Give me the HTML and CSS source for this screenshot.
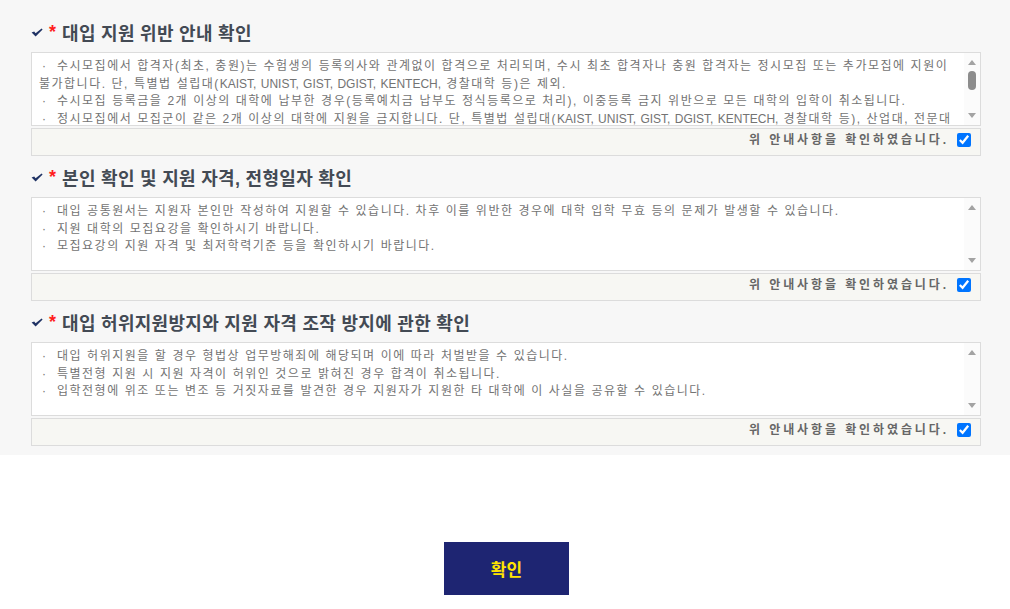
FILE: index.html
```html
<!DOCTYPE html>
<html lang="ko">
<head>
    <meta charset="UTF-8">
    <meta name="viewport" content="width=device-width, initial-scale=1.0">
    <title>지원 전 확인사항</title>
    <link rel="stylesheet" href="styles.css">
</head>
<body>
    <div class="agree-area">
        <!-- 대입 지원 위반 안내 -->
        <div class="agree-section">
            <h3 class="agree-title">
                <svg class="check-icon" width="12" height="9" viewBox="0 0 12 9"><path d="M0.6 4.6 L3.2 3.4 L4.6 5.2 L10.6 0.4 L11.6 1.6 L4.6 8.4 Z" fill="#1f3264"/></svg>
                <span class="required">*</span>대입 지원 위반 안내 확인
            </h3>
            <div class="notice-box">
                <div class="notice-text">
                    <p><span class="bullet">·</span>수시모집에서 합격자(최초, 충원)는 수험생의 등록의사와 관계없이 합격으로 처리되며, 수시 최초 합격자나 충원 합격자는 정시모집 또는 추가모집에 지원이 불가합니다. 단, 특별법 설립대(<span class="en">KAIST, UNIST, GIST, DGIST, KENTECH,</span> 경찰대학 등)은 제외.</p>
                    <p><span class="bullet">·</span>수시모집 등록금을 2개 이상의 대학에 납부한 경우(등록예치금 납부도 정식등록으로 처리), 이중등록 금지 위반으로 모든 대학의 입학이 취소됩니다.</p>
                    <p><span class="bullet">·</span>정시모집에서 모집군이 같은 2개 이상의 대학에 지원을 금지합니다. 단, 특별법 설립대(<span class="en">KAIST, UNIST, GIST, DGIST, KENTECH,</span> 경찰대학 등), 산업대, 전문대학은 제외.</p>
                    <p><span class="bullet">·</span>정시모집 등록금을 2개 이상의 대학에 납부한 경우 이중등록 금지 위반으로 모든 대학의 입학이 취소됩니다.</p>
                    <p><span class="bullet">·</span>추가모집에서 합격한 후 등록한 경우 다른 대학의 추가모집에 지원할 수 없습니다.</p>
                    <p><span class="bullet">·</span>위 사항을 위반한 경우 모든 대학의 입학이 취소될 수 있습니다.</p>
                </div>
                <div class="scroll-bar">
                    <span class="arrow up"></span>
                    <span class="track"><span class="thumb"></span></span>
                    <span class="arrow down"></span>
                </div>
            </div>
            <label class="confirm-row">
                위 안내사항을 확인하였습니다.
                <input type="checkbox" checked>
            </label>
        </div>

        <!-- 본인 확인 및 지원 자격 -->
        <div class="agree-section">
            <h3 class="agree-title">
                <svg class="check-icon" width="12" height="9" viewBox="0 0 12 9"><path d="M0.6 4.6 L3.2 3.4 L4.6 5.2 L10.6 0.4 L11.6 1.6 L4.6 8.4 Z" fill="#1f3264"/></svg>
                <span class="required">*</span>본인 확인 및 지원 자격, 전형일자 확인
            </h3>
            <div class="notice-box">
                <div class="notice-text">
                    <p><span class="bullet">·</span>대입 공통원서는 지원자 본인만 작성하여 지원할 수 있습니다. 차후 이를 위반한 경우에 대학 입학 무효 등의 문제가 발생할 수 있습니다.</p>
                    <p><span class="bullet">·</span>지원 대학의 모집요강을 확인하시기 바랍니다.</p>
                    <p><span class="bullet">·</span>모집요강의 지원 자격 및 최저학력기준 등을 확인하시기 바랍니다.</p>
                </div>
                <div class="scroll-bar">
                    <span class="arrow up"></span>
                    <span class="track"></span>
                    <span class="arrow down"></span>
                </div>
            </div>
            <label class="confirm-row">
                위 안내사항을 확인하였습니다.
                <input type="checkbox" checked>
            </label>
        </div>

        <!-- 허위지원 방지 -->
        <div class="agree-section">
            <h3 class="agree-title">
                <svg class="check-icon" width="12" height="9" viewBox="0 0 12 9"><path d="M0.6 4.6 L3.2 3.4 L4.6 5.2 L10.6 0.4 L11.6 1.6 L4.6 8.4 Z" fill="#1f3264"/></svg>
                <span class="required">*</span>대입 허위지원방지와 지원 자격 조작 방지에 관한 확인
            </h3>
            <div class="notice-box">
                <div class="notice-text">
                    <p><span class="bullet">·</span>대입 허위지원을 할 경우 형법상 업무방해죄에 해당되며 이에 따라 처벌받을 수 있습니다.</p>
                    <p><span class="bullet">·</span>특별전형 지원 시 지원 자격이 허위인 것으로 밝혀진 경우 합격이 취소됩니다.</p>
                    <p><span class="bullet">·</span>입학전형에 위조 또는 변조 등 거짓자료를 발견한 경우 지원자가 지원한 타 대학에 이 사실을 공유할 수 있습니다.</p>
                </div>
                <div class="scroll-bar">
                    <span class="arrow up"></span>
                    <span class="track"></span>
                    <span class="arrow down"></span>
                </div>
            </div>
            <label class="confirm-row">
                위 안내사항을 확인하였습니다.
                <input type="checkbox" checked>
            </label>
        </div>
    </div>

    <div class="btn-area">
        <button type="button" class="btn-confirm">확인</button>
    </div>
</body>
</html>
```

FILE: styles.css
```css
body {
    margin: 0;
    font-family: 'Liberation Sans', 'Noto Sans CJK KR', sans-serif;
    background-color: #fff;
}

.agree-area {
    background-color: #f7f7f7;
    padding: 20px 29px 9px 31px;
}

.agree-section + .agree-section {
    margin-top: 9px;
}

.agree-title {
    display: flex;
    align-items: center;
    height: 24px;
    margin: 0 0 8px;
    font-size: 18px;
    font-weight: bold;
    letter-spacing: 0.3px;
    color: #434a54;
}

.check-icon {
    margin-right: 6px;
}

.required {
    color: #ff1e1e;
    margin-right: 6px;
    letter-spacing: 0;
}

.notice-box {
    display: flex;
    height: 74px;
    box-sizing: border-box;
    border: 1px solid #dcdcdc;
    background-color: #fff;
}

.notice-text {
    flex: 1;
    overflow: hidden;
    padding: 5px 8px 0 7px;
    font-size: 12px;
    line-height: 17.5px;
    letter-spacing: 1.5px;
    word-spacing: 0.2px;
    color: #737373;
}

.notice-text p {
    margin: 0;
}

/* 영문은 좁게 */
.notice-text .en {
    font-family: 'Liberation Sans Narrow', 'Liberation Sans', sans-serif;
    letter-spacing: 0;
    word-spacing: 1px;
}

.bullet {
    display: inline-block;
    width: 18px;
    padding-left: 3px;
    box-sizing: border-box;
}

/* 예전 스타일 스크롤바 */
.scroll-bar {
    width: 16px;
    display: flex;
    flex-direction: column;
    align-items: center;
    padding: 7px 0;
    background-color: #fbfbfb;
}

.arrow {
    width: 0;
    height: 0;
    border-left: 4.5px solid transparent;
    border-right: 4.5px solid transparent;
}

.arrow.up {
    border-bottom: 5px solid #a3a3a3;
}

.arrow.down {
    border-top: 5px solid #a3a3a3;
}

.track {
    flex: 1;
    padding-top: 6px;
}

.thumb {
    display: block;
    width: 8px;
    height: 19px;
    border-radius: 4px;
    background-color: #8c8c8c;
}

.confirm-row {
    display: flex;
    justify-content: flex-end;
    align-items: flex-start;
    height: 28px;
    box-sizing: border-box;
    margin-top: 2px;
    padding: 4px 9px 0 0;
    border: 1px solid #dcdcdc;
    background-color: #f7f7f3;
    font-size: 12px;
    line-height: 14px;
    font-weight: bold;
    letter-spacing: 2.9px;
    color: #666;
}

.confirm-row input {
    width: 14px;
    height: 14px;
    margin: 0 0 0 8px;
}

.btn-area {
    display: flex;
    justify-content: center;
    padding: 87px 0 0 3px;
}

.btn-confirm {
    width: 125px;
    height: 53px;
    border: none;
    background-color: #1e2572;
    color: #ffe400;
    font-family: 'Noto Sans CJK KR', sans-serif;
    font-size: 17px;
    font-weight: bold;
    cursor: pointer;
}
```
